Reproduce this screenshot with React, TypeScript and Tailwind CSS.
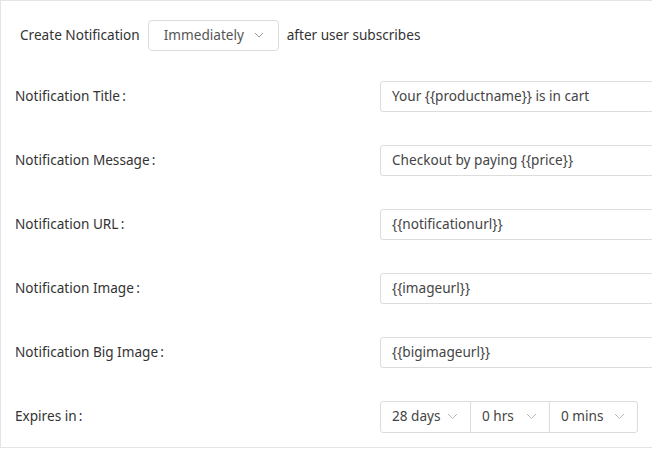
import React from "react";

const Chev = () => (
  <svg width="11" height="7" viewBox="0 0 11 7" className="ml-auto shrink-0"><path d="M1 1l4.5 4.5L10 1" fill="none" stroke="#b8b8b8" strokeWidth="1" /></svg>
);

const rows = [
  ["Notification Title", "Your {{productname}} is in cart"],
  ["Notification Message", "Checkout by paying {{price}}"],
  ["Notification URL", "{{notificationurl}}"],
  ["Notification Image", "{{imageurl}}"],
  ["Notification Big Image", "{{bigimageurl}}"],
];

export default function App() {
  return (
    <div className="w-[652px] h-[449px] bg-white overflow-hidden text-[13.6px] text-[#333]" style={{ fontFamily: "'Noto Sans', sans-serif" }}>
      <div className="w-[700px] h-[448px] border border-[#e4e4e4]">
        <div className="flex items-center h-[30px] mt-[19px] ml-[19px]">
          <span>Create Notification</span>
          <div className="ml-[8px] w-[131px] h-[31px] border border-[#dcdcdc] rounded-[4px] flex items-center pl-[15px] text-[#555]">
            <span>Immediately</span>
            <svg width="10" height="6" viewBox="0 0 10 6" className="ml-[10px] shrink-0"><path d="M1 1l4 4 4-4" fill="none" stroke="#999" strokeWidth="1" /></svg>
          </div>
          <span className="ml-[8px]">after user subscribes</span>
        </div>
        <div className="flex flex-col mt-[31px] gap-[33px]">
          {rows.map(([l, v]) => (
            <div key={l} className="flex items-center h-[31px] pl-[14px]">
              <span className="w-[365px]">{l}{"\u2009"}:</span>
              <div className="w-[300px] h-[31px] border border-[#dcdcdc] rounded-[3px] flex items-center pl-[11px] text-[#444]">{v}</div>
            </div>
          ))}
          <div className="flex items-center h-[31px] pl-[14px]">
            <span className="w-[365px]">Expires in{"\u2009"}:</span>
            <div className="flex h-[32px] border border-[#dcdcdc] rounded-[3px] text-[#444]">
              {[["28 days", 89], ["0 hrs", 79], ["0 mins", 88]].map(([t, w], i) => (
                <div key={t as string} className={`flex items-center pl-[11px] pr-[12px] ${i > 0 ? "border-l border-[#dcdcdc]" : ""}`} style={{ width: w as number }}>
                  <span>{t}</span>
                  <Chev />
                </div>
              ))}
            </div>
          </div>
        </div>
      </div>
    </div>
  );
}
